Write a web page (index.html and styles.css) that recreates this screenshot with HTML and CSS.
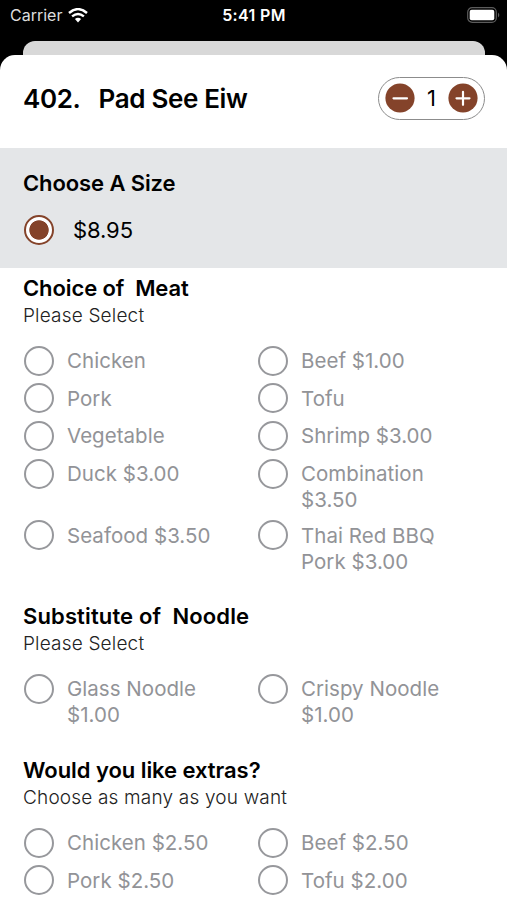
FILE: index.html
```html
<!DOCTYPE html>
<html lang="en">
<head>
<meta charset="utf-8">
<title>Pad See Eiw</title>
<link rel="stylesheet" href="styles.css">
</head>
<body>
<header class="status">
  <div class="carrier"><span>Carrier</span>
    <svg width="20" height="15" viewBox="0 0 20 15" fill="none" stroke="#fff" stroke-width="2.4"><path d="M1 5Q10-2.8 19 5M4.1 8.4Q10 3.4 15.9 8.4"/><path d="M6.9 11Q10 8.3 13.1 11L10 14.4Z" fill="#fff" stroke="none"/></svg>
  </div>
  <div class="time">5:41 PM</div>
  <svg class="battery" width="33" height="16" viewBox="0 0 33 16"><rect x=".7" y=".7" width="28.6" height="14.6" rx="4.5" fill="none" stroke="#5c5c5c" stroke-width="1.2"/><rect x="2.7" y="2.7" width="24.6" height="10.6" rx="2" fill="#fff"/><path d="M31 5.6Q33.6 8 31 10.4Z" fill="#5c5c5c"/></svg>
</header>
<div class="behind"></div>
<main class="sheet">
  <section class="title">
    <h1><span>402.</span><span>Pad See Eiw</span></h1>
    <div class="stepper">
      <svg width="30" height="30" viewBox="0 0 30 30"><circle cx="15" cy="15" r="14.6" fill="#84432a"/><path d="M8.5 15.3H22" stroke="#fff" stroke-width="2.2" stroke-linecap="round"/></svg>
      <span>1</span>
      <svg width="30" height="30" viewBox="0 0 30 30"><circle cx="15" cy="15" r="14.6" fill="#84432a"/><path d="M8.5 15.3H21.5M15 8.8V21.8" stroke="#fff" stroke-width="2.2" stroke-linecap="round"/></svg>
    </div>
  </section>
  <section class="size">
    <h2>Choose A Size</h2>
    <div class="price"><i class="radio on"></i><span>$8.95</span></div>
  </section>
  <section class="group meat">
    <h2>Choice of&nbsp; Meat</h2>
    <p>Please Select</p>
    <div class="grid">
      <div class="opt"><i class="radio"></i><span>Chicken</span></div><div class="opt"><i class="radio"></i><span>Beef $1.00</span></div>
      <div class="opt"><i class="radio"></i><span>Pork</span></div><div class="opt"><i class="radio"></i><span>Tofu</span></div>
      <div class="opt"><i class="radio"></i><span>Vegetable</span></div><div class="opt"><i class="radio"></i><span>Shrimp $3.00</span></div>
      <div class="opt"><i class="radio"></i><span>Duck $3.00</span></div><div class="opt"><i class="radio"></i><span>Combination<br>$3.50</span></div>
      <div class="opt"><i class="radio"></i><span>Seafood $3.50</span></div><div class="opt"><i class="radio"></i><span>Thai Red BBQ<br>Pork $3.00</span></div>
    </div>
  </section>
  <section class="group noodle">
    <h2>Substitute of&nbsp; Noodle</h2>
    <p>Please Select</p>
    <div class="grid">
      <div class="opt"><i class="radio"></i><span>Glass Noodle<br>$1.00</span></div><div class="opt"><i class="radio"></i><span>Crispy Noodle<br>$1.00</span></div>
    </div>
  </section>
  <section class="group extras">
    <h2>Would you like extras?</h2>
    <p>Choose as many as you want</p>
    <div class="grid">
      <div class="opt"><i class="radio"></i><span>Chicken $2.50</span></div><div class="opt"><i class="radio"></i><span>Beef $2.50</span></div>
      <div class="opt"><i class="radio"></i><span>Pork $2.50</span></div><div class="opt"><i class="radio"></i><span>Tofu $2.00</span></div>
    </div>
  </section>
</main>
</body>
</html>
```
FILE: styles.css
```css
* { box-sizing: border-box; }
body { margin: 0; height: 900px; overflow: hidden; background: #000; color: #000; font-family: Inter, "Liberation Sans", sans-serif; }
h1, h2, p { margin: 0; }
.status { height: 41px; padding: 0 7px 11px 10px; display: grid; grid-template-columns: 1fr auto 1fr; align-items: center; color: #fff; }
.carrier { display: flex; align-items: center; gap: 6px; font-size: 16px; color: #ddd; }
.time { font-size: 16px; font-weight: 600; letter-spacing: .35px; margin-right: 2px; }
.battery { justify-self: end; }
.behind { height: 14px; margin: 0 22px 0 23px; background: #d8d8d8; border-radius: 12px 12px 0 0; }
.sheet { height: 845px; background: #fff; border-radius: 15px 15px 0 0; overflow: hidden; }
.title { height: 93px; padding: 0 22px 7px 23px; display: flex; align-items: center; justify-content: space-between; }
h1 { display: flex; gap: 18px; font-size: 26px; font-weight: 600; letter-spacing: -.35px; }
.stepper { width: 107px; height: 43px; border: 1.5px solid #8c8c8c; border-radius: 22px; padding: 0 6px; display: flex; align-items: center; justify-content: space-between; font-size: 22px; }
.size { height: 120px; padding: 20px 23px 0; background: #e4e6e8; }
h2 { font-size: 22px; line-height: 30px; font-weight: 600; letter-spacing: -.1px; }
.noodle h2 { letter-spacing: .13px; }
.extras h2 { letter-spacing: -.05px; }
.price { display: flex; align-items: center; gap: 19px; margin-top: 17px; font-size: 22px; line-height: 30px; letter-spacing: -.1px; }
.radio { flex: none; width: 30px; height: 30px; margin-left: 1px; border: 2px solid #97989c; border-radius: 50%; }
.radio.on { border-color: #84432a; background: radial-gradient(circle, #84432a 9.3px, #fff 10.1px); }
.group { padding: 5px 23px 0; }
.meat { height: 328px; }
.noodle { height: 154px; }
p { font-size: 19px; line-height: 26px; color: #222; font-weight: 300; letter-spacing: .18px; }
.grid { display: grid; grid-template-columns: 234px 1fr; row-gap: 7.7px; margin-top: 16.5px; }
.opt { display: flex; align-items: flex-start; gap: 13px; min-height: 30px; font-size: 20.5px; line-height: 26.2px; letter-spacing: .03px; color: #929397; }
.opt span { padding-top: 2.6px; margin-bottom: -1.2px; }
```
